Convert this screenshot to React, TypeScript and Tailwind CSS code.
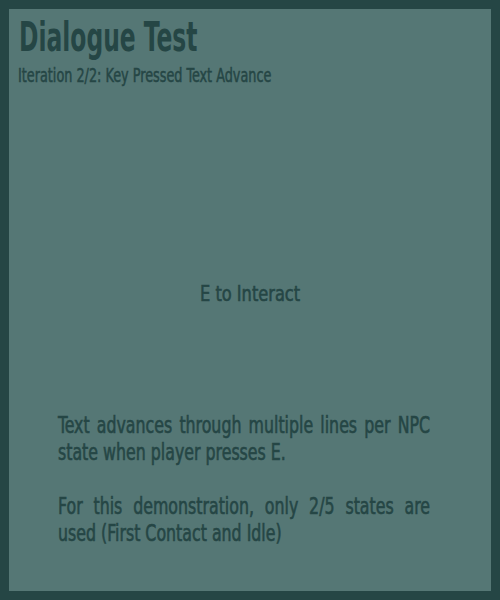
import React from "react";

export default function App() {
  const font = { fontFamily: '"DejaVu Sans Condensed", "DejaVu Sans", sans-serif' };
  return (
    <div className="w-[500px] h-[600px] bg-[#254645] p-[9px]" style={font}>
      <div className="w-full h-full bg-[#557775] text-[#254645] flex flex-col">
        <div className="pl-[10px] pt-[4px]">
          <div className="text-[41px] leading-[48px] font-bold whitespace-nowrap origin-left scale-x-[0.635]">Dialogue Test</div>
          <div className="mt-[3px] -ml-[1px] text-[19px] leading-[22px] whitespace-nowrap origin-left scale-x-[0.75] [-webkit-text-stroke:0.5px_#254645]">Iteration 2/2: Key Pressed Text Advance</div>
        </div>
        <div className="mt-[195px] flex justify-center">
          <div className="text-[22px] leading-[26px] whitespace-nowrap scale-x-[0.82] [-webkit-text-stroke:0.6px_#254645]">E to Interact</div>
        </div>
        <div className="mt-[105px] ml-[49px] w-[487px] text-[23px] leading-[27px] origin-left scale-x-[0.764] [-webkit-text-stroke:0.6px_#254645]">
          <div className="text-justify [text-align-last:justify]">Text advances through multiple lines per NPC</div>
          <div>state when player presses E.</div>
          <div className="mt-[27px] text-justify [text-align-last:justify]">For this demonstration, only 2/5 states are</div>
          <div>used (First Contact and Idle)</div>
        </div>
      </div>
    </div>
  );
}
